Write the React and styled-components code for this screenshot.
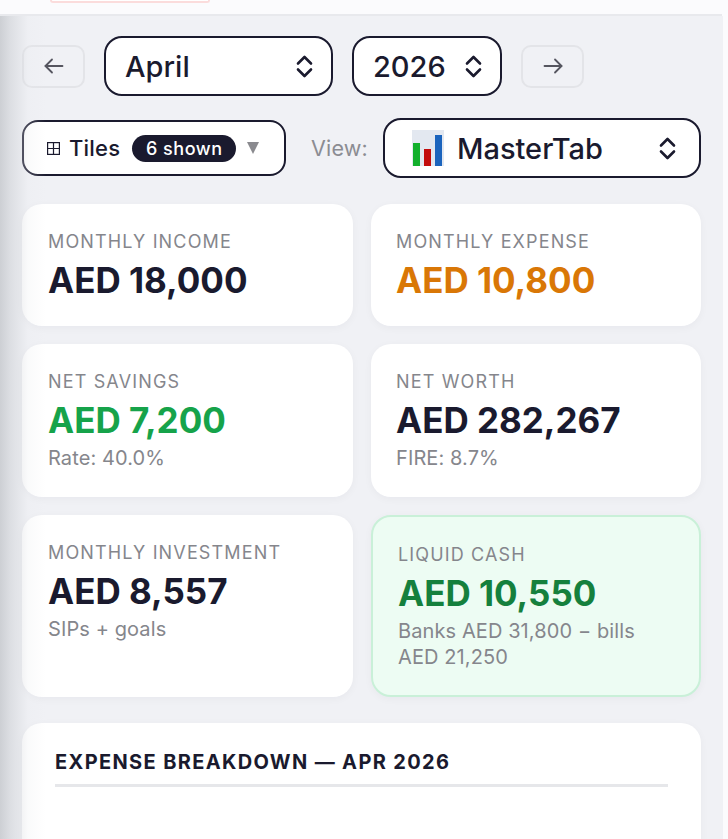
import React from 'react'
import styled, { createGlobalStyle } from 'styled-components'

const GlobalStyle = createGlobalStyle`
  html, body {
    margin: 0;
    padding: 0;
    background: #fbfbfd;
    font-family: Inter, "Liberation Sans", sans-serif;
    color: #1a1a2e;
    overflow: hidden;
  }
  * { box-sizing: border-box; }
`

const Page = styled.div`
  position: relative;
  width: 728px;
  height: 839px;
  overflow: hidden;
`

const EdgeShade = styled.div`
  position: absolute;
  left: 0;
  top: 16px;
  bottom: 0;
  width: 46px;
  background: linear-gradient(90deg, rgba(190,193,198,0.7) 0, rgba(200,203,208,0.5) 10px, rgba(230,232,236,0.2) 28px, rgba(240,241,245,0) 46px);
  pointer-events: none;
`

const TopBar = styled.header`
  width: 722px;
  height: 16px;
  background: #fbfbfd;
  border-bottom: 2px solid #e8e9ed;
  padding-left: 50px;
`

const PinkButton = styled.div`
  width: 160px;
  height: 3px;
  background: #fff;
  border: 2px solid #fbdcdc;
  border-top: none;
  border-radius: 0 0 14px 14px;
`

const Main = styled.main`
  width: 723px;
  height: 823px;
  background: #f0f1f5;
  padding: 20px 22px 0;
  overflow: hidden;
`

const DateRow = styled.div`
  display: flex;
  align-items: center;
  gap: 19px;
  height: 60px;
`

const ArrowButton = styled.button`
  width: 63px;
  height: 43px;
  border: 2px solid #e3e4e8;
  border-radius: 10px;
  background: #f0f1f5;
  color: #55555f;
  display: flex;
  align-items: center;
  justify-content: center;
  padding: 0;
`

const SelectBox = styled.div`
  width: ${p => p.$w}px;
  height: 60px;
  border: 2.5px solid #1a1a2e;
  border-radius: 18px;
  background: #fff;
  display: flex;
  align-items: center;
  justify-content: space-between;
  padding: 0 ${p => p.$right || 18}px 0 ${p => p.$left || 19}px;
  font-size: 29px;
  font-weight: 500;
`

const SelectLabel = styled.span`
  display: flex;
  align-items: center;
  gap: 13px;
`

const Controls = styled.div`
  display: flex;
  align-items: center;
  margin-top: 22px;
  height: 60px;
`

const TilesButton = styled.div`
  width: 264px;
  height: 56px;
  border: 2.5px solid #1a1a2e;
  border-radius: 16px;
  background: #fff;
  display: flex;
  align-items: center;
  padding-left: 23px;
  font-size: 22px;
  font-weight: 500;
`

const TilesLabel = styled.span`
  margin-left: 9px;
  letter-spacing: 0.2px;
`

const Badge = styled.span`
  margin-left: 12px;
  height: 27px;
  width: 104px;
  border-radius: 14px;
  background: #1a1a2e;
  color: #fff;
  font-size: 18px;
  font-weight: 500;
  letter-spacing: 0.5px;
  display: flex;
  align-items: center;
  justify-content: center;
`

const Caret = styled.span`
  margin-left: 11px;
  width: 0;
  height: 0;
  border-left: 6.5px solid transparent;
  border-right: 6.5px solid transparent;
  border-top: 12px solid #8a8a8f;
`

const ViewLabel = styled.span`
  margin-left: 25px;
  margin-right: 15px;
  font-size: 21.5px;
  letter-spacing: 0.2px;
  color: #8b8c92;
`

const Grid = styled.section`
  display: grid;
  grid-template-columns: 331px 330px;
  grid-template-rows: 122px 153px 182px;
  gap: 18px;
  margin-top: 26px;
`

const Card = styled.article`
  border-radius: 20px;
  padding: ${p => (p.$accent ? '27px 25px 0' : '27px 26px 0')};
  background: ${p => (p.$accent ? '#edfcf3' : '#fff')};
  border: ${p => (p.$accent ? '2px solid #c9f0d8' : 'none')};
  box-shadow: 0 2px 8px rgba(26, 26, 46, 0.04);

  &:nth-child(even):not(:last-child) {
    padding-left: 25px;
  }
`

const CardLabel = styled.div`
  font-size: 18px;
  line-height: 22px;
  letter-spacing: 1.15px;
  text-transform: uppercase;
  color: #85868c;
`

const CardValue = styled.div`
  margin-top: 6px;
  font-size: 35px;
  line-height: 42px;
  font-weight: 700;
  color: ${p => p.$color || '#1a1a2e'};
`

const CardSub = styled.div`
  margin-top: 4px;
  font-size: 20px;
  line-height: 26px;
  letter-spacing: 0.1px;
  color: #85868c;
`

const Panel = styled.section`
  margin-top: 26px;
  height: 200px;
  background: #fff;
  border-radius: 20px;
  padding: 27px 33px;
  box-shadow: 0 2px 8px rgba(26, 26, 46, 0.04);
`

const PanelTitle = styled.h2`
  margin: 0;
  padding-bottom: 9px;
  border-bottom: 3px solid #e6e7ea;
  font-size: 20px;
  line-height: 25px;
  font-weight: 700;
  letter-spacing: 1.36px;
  text-transform: uppercase;
  color: #1a1a2e;
`

const ChevronPair = () => (
  <svg width="17" height="23" viewBox="0 0 17 23" fill="none" stroke="#1a1a2e" strokeWidth="2.6" strokeLinecap="round" strokeLinejoin="round">
    <path d="M2 8.5 L8.5 2 L15 8.5" />
    <path d="M2 14.5 L8.5 21 L15 14.5" />
  </svg>
)

const Arrow = ({ flip }) => (
  <svg width="20" height="16" viewBox="0 0 20 16" fill="none" stroke="currentColor" strokeWidth="1.8" strokeLinecap="round" strokeLinejoin="round" style={flip ? { transform: 'scaleX(-1)' } : undefined}>
    <path d="M1.5 8 H18.5" />
    <path d="M8 1.5 L1.5 8 L8 14.5" />
  </svg>
)

const GridIcon = () => (
  <svg width="13" height="13" viewBox="0 0 13 13" fill="none" stroke="#1a1a2e" strokeWidth="1.2">
    <rect x="0.6" y="0.6" width="11.8" height="11.8" />
    <path d="M6.5 0.6 V12.4 M0.6 6.5 H12.4" />
  </svg>
)

const ChartIcon = () => (
  <svg width="32" height="36" viewBox="0 0 32 36">
    <rect width="32" height="36" fill="#e3e8f0" />
    <rect x="1" y="13" width="7" height="23" fill="#12b02c" />
    <rect x="12" y="19" width="7" height="17" fill="#c30c0c" />
    <rect x="23" y="5" width="7" height="31" fill="#1b64bd" />
  </svg>
)

const tiles = [
  { label: 'Monthly Income', value: 'AED 18,000' },
  { label: 'Monthly Expense', value: 'AED 10,800', color: '#d97706' },
  { label: 'Net Savings', value: 'AED 7,200', color: '#16a34a', sub: 'Rate: 40.0%' },
  { label: 'Net Worth', value: 'AED 282,267', sub: 'FIRE: 8.7%' },
  { label: 'Monthly Investment', value: 'AED 8,557', sub: 'SIPs + goals' },
  { label: 'Liquid Cash', value: 'AED 10,550', color: '#15803d', sub: 'Banks AED 31,800 − bills AED 21,250', accent: true },
]

export default function App() {
  return (
    <Page>
      <GlobalStyle />
      <TopBar>
        <PinkButton />
      </TopBar>
      <Main>
        <DateRow>
          <ArrowButton aria-label="Previous month"><Arrow /></ArrowButton>
          <SelectBox $w={229}>April <ChevronPair /></SelectBox>
          <SelectBox $w={150}>2026 <ChevronPair /></SelectBox>
          <ArrowButton aria-label="Next month"><Arrow flip /></ArrowButton>
        </DateRow>
        <Controls>
          <TilesButton>
            <GridIcon />
            <TilesLabel>Tiles</TilesLabel>
            <Badge>6 shown</Badge>
            <Caret />
          </TilesButton>
          <ViewLabel>View:</ViewLabel>
          <SelectBox $w={318} $left={27} $right={23}>
            <SelectLabel><ChartIcon /> MasterTab</SelectLabel>
            <ChevronPair />
          </SelectBox>
        </Controls>
        <Grid>
          {tiles.map(t => (
            <Card key={t.label} $accent={t.accent}>
              <CardLabel>{t.label}</CardLabel>
              <CardValue $color={t.color}>{t.value}</CardValue>
              {t.sub && <CardSub>{t.sub}</CardSub>}
            </Card>
          ))}
        </Grid>
        <Panel>
          <PanelTitle>Expense Breakdown — Apr 2026</PanelTitle>
        </Panel>
      </Main>
      <EdgeShade />
    </Page>
  )
}
